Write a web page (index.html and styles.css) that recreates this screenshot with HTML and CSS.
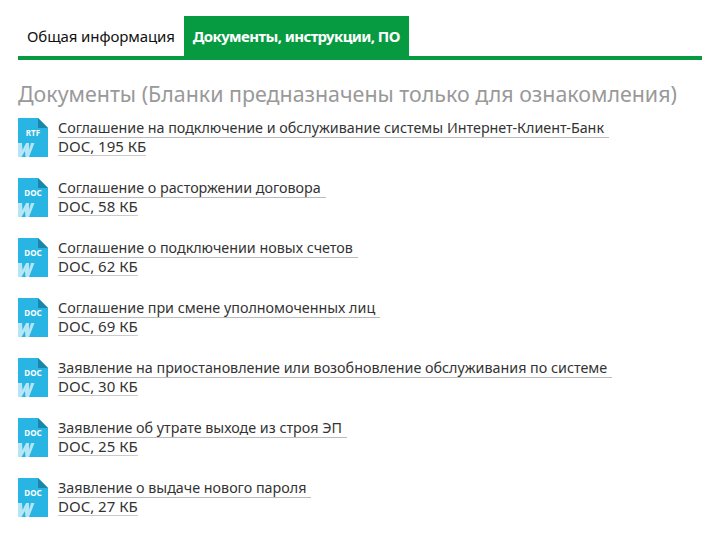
FILE: index.html
```html
<!DOCTYPE html>
<html>
<head>
  <title>Документы</title>
  <link rel="stylesheet" href="styles.css">
</head>

<body>
  <svg class="sprite" width="0" height="0">
    <symbol id="file-icon" viewBox="0 0 30 40">
      <path d="M0 0H20L30 10V39H0Z" fill="#29b5e3"/>
      <path d="M20 0L30 10H20Z" fill="#1b86ab"/>
      <path d="M0 25H4L4.5 32L8 25H11L11 32L13 25H16.5L11 39H7.5L7 33L3.5 39H0Z" fill="#b5e6f5"/>
    </symbol>
  </svg>

  <ul class="tabs">
    <li class="tab">Общая информация</li>
    <li class="tab active">Документы, инструкции, ПО</li>
  </ul>

  <h2 class="title">Документы (Бланки предназначены только для ознакомления)</h2>

  <ul class="docs">
    <li class="doc">
      <span class="icon"><svg width="30" height="40"><use href="#file-icon"/></svg><span class="ext">RTF</span></span>
      <div class="info">
        <a class="name" href="#">Соглашение на подключение и обслуживание системы Интернет-Клиент-Банк</a>
        <a class="size" href="#">DOC, 195 КБ</a>
      </div>
    </li>
    <li class="doc">
      <span class="icon"><svg width="30" height="40"><use href="#file-icon"/></svg><span class="ext">DOC</span></span>
      <div class="info">
        <a class="name" href="#">Соглашение о расторжении договора</a>
        <a class="size" href="#">DOC, 58 КБ</a>
      </div>
    </li>
    <li class="doc">
      <span class="icon"><svg width="30" height="40"><use href="#file-icon"/></svg><span class="ext">DOC</span></span>
      <div class="info">
        <a class="name" href="#">Соглашение о подключении новых счетов</a>
        <a class="size" href="#">DOC, 62 КБ</a>
      </div>
    </li>
    <li class="doc">
      <span class="icon"><svg width="30" height="40"><use href="#file-icon"/></svg><span class="ext">DOC</span></span>
      <div class="info">
        <a class="name" href="#">Соглашение при смене уполномоченных лиц</a>
        <a class="size" href="#">DOC, 69 КБ</a>
      </div>
    </li>
    <li class="doc">
      <span class="icon"><svg width="30" height="40"><use href="#file-icon"/></svg><span class="ext">DOC</span></span>
      <div class="info">
        <a class="name" href="#">Заявление на приостановление или возобновление обслуживания по системе</a>
        <a class="size" href="#">DOC, 30 КБ</a>
      </div>
    </li>
    <li class="doc">
      <span class="icon"><svg width="30" height="40"><use href="#file-icon"/></svg><span class="ext">DOC</span></span>
      <div class="info">
        <a class="name" href="#">Заявление об утрате выходе из строя ЭП</a>
        <a class="size" href="#">DOC, 25 КБ</a>
      </div>
    </li>
    <li class="doc">
      <span class="icon"><svg width="30" height="40"><use href="#file-icon"/></svg><span class="ext">DOC</span></span>
      <div class="info">
        <a class="name" href="#">Заявление о выдаче нового пароля</a>
        <a class="size" href="#">DOC, 27 КБ</a>
      </div>
    </li>
  </ul>
</body>
</html>
```

FILE: styles.css
```css
body {
  font-family: "Noto Sans", "Open Sans", sans-serif;
  background-color: #fff;
  color: #333;
  margin: 0;
  padding: 16px 0 0 18px;
}

.sprite {
  display: block;
  height: 0;
}

.tabs {
  display: flex;
  list-style: none;
  margin: 0;
  padding: 0;
  border-bottom: 4px solid #069b41;
}

.tab {
  height: 40px;
  line-height: 41px;
  padding: 0 9px;
  font-size: 15px;
  letter-spacing: -0.1px;
  color: #111;
}

.tab.active {
  background-color: #069b41;
  color: #fff;
  font-weight: bold;
  letter-spacing: -0.6px;
}

.title {
  margin: 20px 0 0;
  font-size: 21.4px;
  line-height: 28px;
  font-weight: normal;
  color: #999;
}

.docs {
  list-style: none;
  margin: 10px 0 0;
  padding: 0;
}

.doc {
  display: flex;
  gap: 10px;
  height: 60px;
}

.icon {
  position: relative;
  width: 30px;
  height: 40px;
}

.ext {
  position: absolute;
  top: 10px;
  left: 0;
  width: 30px;
  text-align: center;
  font-size: 8px;
  line-height: 10px;
  font-weight: bold;
  color: #fff;
}

.info {
  display: flex;
  flex-direction: column;
  align-items: flex-start;
  padding-top: 1px;
}

.name,
.size {
  color: #333;
  text-decoration: none;
}

.name {
  font-size: 14.3px;
  line-height: 18px;
  padding-right: 5px;
  border-bottom: 1px solid #bbb;
}

.size {
  font-size: 15px;
  line-height: 17px;
  border-bottom: 1px solid #ccc;
}
```
